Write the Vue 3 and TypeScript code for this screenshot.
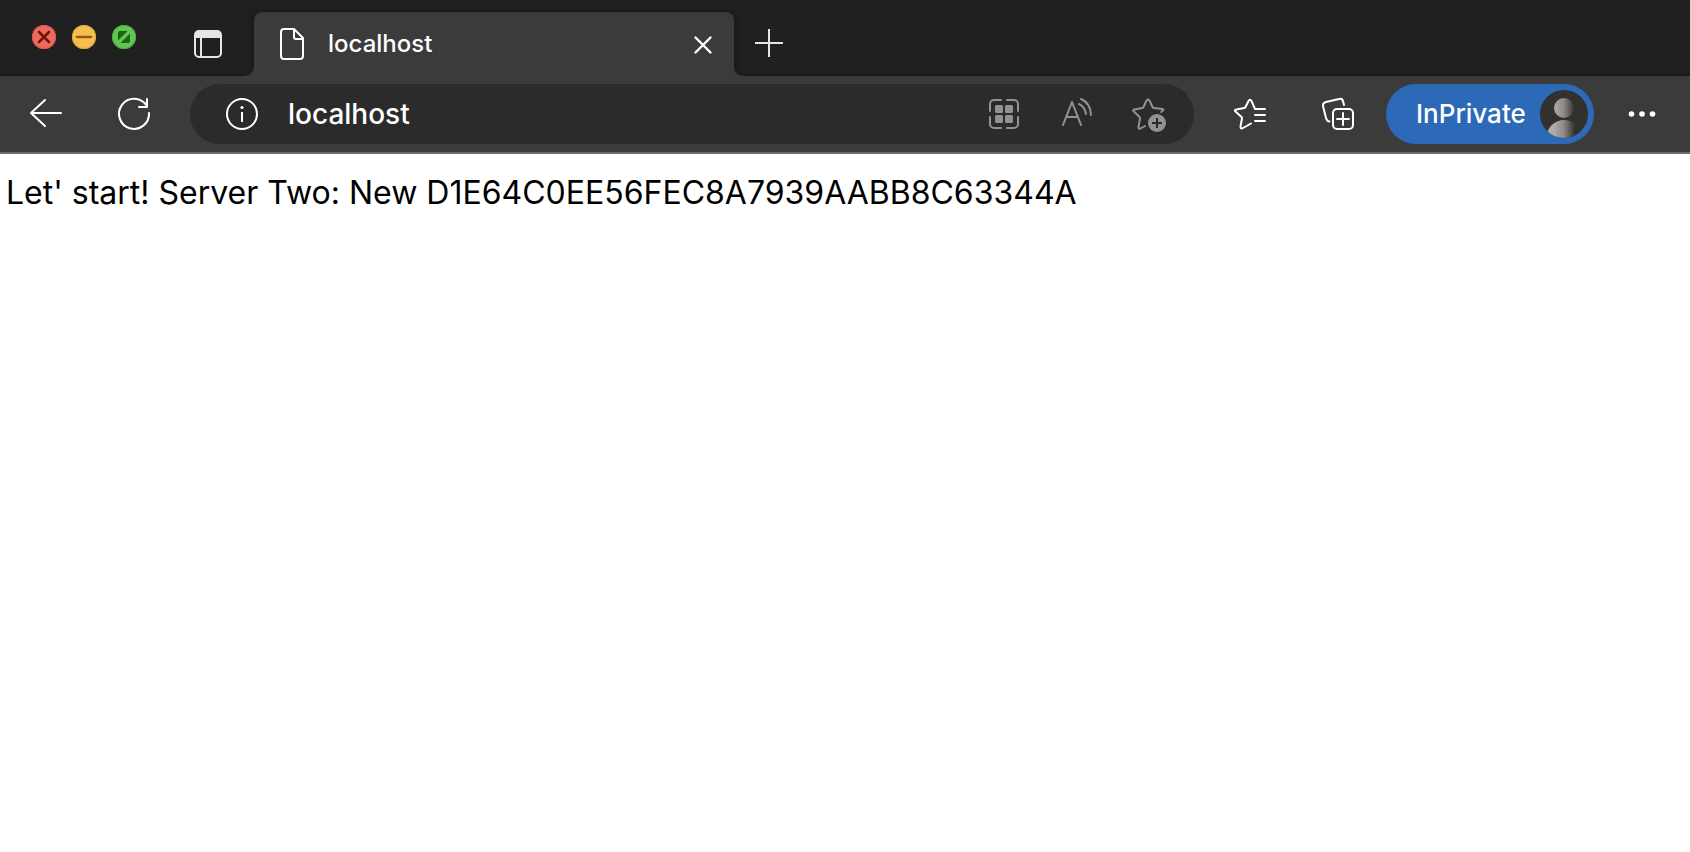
<script setup lang="ts">
import { ref } from 'vue'

interface WindowControl {
  name: string
  kind: 'close' | 'minimize' | 'zoom'
}

const windowControls: WindowControl[] = [
  { name: 'Close window', kind: 'close' },
  { name: 'Minimize window', kind: 'minimize' },
  { name: 'Zoom window', kind: 'zoom' },
]

const tabTitle = ref('localhost')
const address = ref('localhost')
const sessionId = 'D1E64C0EE56FEC8A7939AABB8C63344A'
</script>

<template>
  <div class="browser">
    <header class="tab-strip">
      <div class="window-controls">
        <button
          v-for="control in windowControls"
          :key="control.kind"
          type="button"
          class="light"
          :class="control.kind"
          :aria-label="control.name"
        >
          <svg viewBox="-12 -12 24 24" width="24" height="24" aria-hidden="true">
            <path v-if="control.kind === 'close'" d="M-5 -5 L5 5 M5 -5 L-5 5" stroke="#78100b" stroke-width="2.6" stroke-linecap="round" />
            <path v-else-if="control.kind === 'minimize'" d="M-7 0 H7" stroke="#985a14" stroke-width="2.6" stroke-linecap="round" />
            <path v-else d="M-6 3.5 V-4 a2 2 0 0 1 2 -2 H3.5 Z M6 -3.5 V4 a2 2 0 0 1 -2 2 H-3.5 Z" fill="#1f6115" />
          </svg>
        </button>
      </div>

      <button type="button" class="icon-button tab-actions" aria-label="Tab actions menu">
        <svg class="icon" viewBox="-20 -20 40 40" aria-hidden="true">
          <rect x="-13" y="-13" width="26" height="26" rx="4" fill="none" stroke="#e6e6e6" stroke-width="2" />
          <path d="M-13 -6 V-10 a3 3 0 0 1 3 -3 H10 a3 3 0 0 1 3 3 V-6 Z" fill="#e6e6e6" />
          <path d="M-7 -6 V13" stroke="#e6e6e6" stroke-width="2" />
        </svg>
      </button>

      <div class="tab">
        <svg class="icon" viewBox="-20 -20 40 40" aria-hidden="true">
          <path class="line" d="M-8 -15 H2 L11 -6 V12 a3 3 0 0 1 -3 3 H-8 a3 3 0 0 1 -3 -3 V-12 a3 3 0 0 1 3 -3 Z M2 -15 V-7 a2 2 0 0 0 2 2 H11" />
        </svg>
        <span class="tab-title">{{ tabTitle }}</span>
        <button type="button" class="icon-button tab-close" aria-label="Close tab">
          <svg class="icon" viewBox="-20 -20 40 40" aria-hidden="true">
            <path class="line cross" d="M-8.5 -6.5 L6.5 8.5 M6.5 -6.5 L-8.5 8.5" />
          </svg>
        </button>
      </div>

      <button type="button" class="icon-button new-tab" aria-label="New tab">
        <svg class="icon" viewBox="-20 -20 40 40" aria-hidden="true">
          <path d="M-14 0 H14 M0 -14 V14" stroke="#e6e6e6" stroke-width="2" />
        </svg>
      </button>
    </header>

    <nav class="toolbar" aria-label="Browser toolbar">
      <div class="group navigation">
        <button type="button" class="icon-button" aria-label="Back">
          <svg class="icon" viewBox="-20 -20 40 40" aria-hidden="true">
            <path class="line" d="M15 -1 H-15 M-1 -14 L-15 -1 L-1 12" />
          </svg>
        </button>
        <button type="button" class="icon-button" aria-label="Refresh">
          <svg class="icon" viewBox="-20 -20 40 40" aria-hidden="true">
            <path class="line" d="M15 -1 A15 15 0 1 1 12.5 -8.5 M13 -15 V-7 H5" />
          </svg>
        </button>
      </div>

      <form class="address-bar" @submit.prevent>
        <button type="button" class="icon-button site-info" aria-label="View site information">
          <svg class="icon" viewBox="-20 -20 40 40" aria-hidden="true">
            <circle class="line" r="15" />
            <circle cy="-6.5" r="1.6" fill="#fff" />
            <path d="M0 -2 V8" stroke="#fff" stroke-width="2" />
          </svg>
        </button>
        <input v-model="address" type="text" class="address" aria-label="Address" spellcheck="false" />
        <button type="button" class="icon-button muted" aria-label="Apps available">
          <svg class="icon" viewBox="-19 -20 40 40" aria-hidden="true">
            <path class="line" d="M-14 -3 V-10 a4 4 0 0 1 4 -4 H-3 M3 -14 H10 a4 4 0 0 1 4 4 V-3 M14 3 V10 a4 4 0 0 1 -4 4 H3 M-3 14 H-10 a4 4 0 0 1 -4 -4 V3" />
            <g fill="#929292">
              <rect x="-9" y="-9" width="8" height="8" rx="1.5" />
              <rect x="1" y="-9" width="8" height="8" rx="1.5" />
              <rect x="-9" y="1" width="8" height="8" rx="1.5" />
              <rect x="1" y="1" width="8" height="8" rx="1.5" />
            </g>
          </svg>
        </button>
        <button type="button" class="icon-button muted" aria-label="Read aloud">
          <svg class="icon" viewBox="-20 -20 40 40" aria-hidden="true">
            <path class="line" d="M-14 11 L-5 -12 L4 11 M-11 3 H1 M2 -10 Q8 -7 9 0 M4 -15 Q13.5 -11 14 1" />
          </svg>
        </button>
        <button type="button" class="icon-button muted" aria-label="Add this page to favorites">
          <svg class="icon" viewBox="-20 -20 40 40" aria-hidden="true">
            <path class="line" d="M12 -2 L14 -3.5 Q15 -5 13.5 -5 L5 -6 Q4 -6 3.5 -7 L0.5 -13.5 Q-1 -15.5 -2.5 -13.5 L-5.5 -7 Q-6 -6 -7 -6 L-14.5 -4.5 Q-17 -4 -15 -2.5 L-9.5 3 Q-9 3.5 -9 4.5 L-10.5 13 Q-10.5 15.5 -8.5 14.5 L-4 12" />
            <circle cx="8" cy="9" r="9" fill="#929292" />
            <path d="M3 9 H13 M8 4 V14" stroke="#2b2b2b" stroke-width="2" />
          </svg>
        </button>
      </form>

      <div class="group collections">
        <button type="button" class="icon-button" aria-label="Favorites">
          <svg class="icon" viewBox="-20 -20 40 40" aria-hidden="true">
            <path class="line" d="M15 -5 H5 L1.5 -13 Q0 -15.5 -1.5 -13 L-4.5 -7 Q-5 -6 -6 -6 L-13.5 -4.5 Q-16.5 -4 -14 -2 L-8.5 3 Q-8 3.5 -8 4.5 L-9.5 12.5 Q-9.5 15.5 -7 14 L1 9.5 M5 1 H15 M5 7 H15" />
          </svg>
        </button>
        <button type="button" class="icon-button" aria-label="Collections">
          <svg class="icon" viewBox="-20 -20 40 40" aria-hidden="true">
            <rect class="line" x="-5" y="-5" width="20" height="20" rx="4" />
            <path class="line" d="M5 -1 V11 M-1 5 H11 M6 -9 L5 -13 Q4 -16 1 -15 L-12 -12 Q-15.5 -11 -15 -8 L-12 4 Q-11 7.5 -8.5 7.5" />
          </svg>
        </button>
      </div>

      <button type="button" class="profile">
        <span>InPrivate</span>
        <svg class="avatar" viewBox="-24 -24 48 48" aria-hidden="true">
          <defs>
            <linearGradient id="silhouette" gradientUnits="userSpaceOnUse" x1="-10" y1="0" x2="11" y2="0">
              <stop offset="0" stop-color="#b0aca8" />
              <stop offset="0.45" stop-color="#8d8a87" />
              <stop offset="1" stop-color="#32312e" />
            </linearGradient>
            <clipPath id="avatar-circle"><circle r="24" /></clipPath>
          </defs>
          <circle r="24" fill="#32312e" />
          <g clip-path="url(#avatar-circle)" fill="url(#silhouette)">
            <circle cy="-6" r="10" />
            <ellipse cy="25" rx="18" ry="19" />
          </g>
        </svg>
      </button>

      <button type="button" class="icon-button" aria-label="Settings and more">
        <svg class="icon" viewBox="-20 -20 40 40" aria-hidden="true" fill="#fff">
          <circle cx="-10.5" r="2.8" />
          <circle r="2.8" />
          <circle cx="10.5" r="2.8" />
        </svg>
      </button>
    </nav>

    <main class="page">
      <p>Let' start! Server Two: New {{ sessionId }}</p>
    </main>
  </div>
</template>

<style>
body {
  margin: 0;
  background: #fff;
}
</style>

<style scoped>
.browser {
  min-height: 100vh;
  background: #fff;
  color: #fff;
  font-family: Inter, Roboto, sans-serif;
  font-weight: 500;
}

button,
input {
  margin: 0;
  padding: 0;
  border: 0;
  background: none;
  color: inherit;
  font: inherit;
}

.tab-strip {
  display: flex;
  align-items: flex-end;
  height: 76px;
  box-sizing: border-box;
  background: linear-gradient(#202020 72px, #191919);
}

.window-controls {
  display: flex;
  gap: 16px;
  margin-bottom: 27px;
  padding-left: 32px;
}

.light {
  width: 24px;
  height: 24px;
  border-radius: 50%;
}

.light svg {
  display: block;
}

.close {
  background: #ed6a5e;
  box-shadow: inset 0 0 0 1px #d9564b;
}

.minimize {
  background: #f5bf4f;
  box-shadow: inset 0 0 0 1px #dba53c;
}

.zoom {
  background: #61c554;
  box-shadow: inset 0 0 0 1px #4faa41;
}

.icon-button {
  display: flex;
  flex: none;
  align-items: center;
  justify-content: center;
  width: 60px;
  height: 60px;
}

.icon {
  flex: none;
  width: 40px;
  height: 40px;
}

.line {
  fill: none;
  stroke: #fff;
  stroke-width: 2;
  stroke-linecap: round;
  stroke-linejoin: round;
}

.cross {
  stroke-width: 2.4;
}

.tab-actions {
  margin: 0 16px 2px 42px;
}

.tab {
  position: relative;
  display: flex;
  align-items: center;
  width: 480px;
  height: 64px;
  box-sizing: border-box;
  padding-left: 18px;
  border-radius: 8px 8px 0 0;
  background: #3b3b3b;
  box-shadow: 0 0 5px rgba(0, 0, 0, 0.5);
}

.tab::before,
.tab::after {
  content: '';
  position: absolute;
  bottom: 0;
  width: 8px;
  height: 8px;
}

.tab::before {
  right: 100%;
  background: radial-gradient(circle at 0 0, transparent 7px, #3b3b3b 8px);
}

.tab::after {
  left: 100%;
  background: radial-gradient(circle at 100% 0, transparent 7px, #3b3b3b 8px);
}

.tab-title {
  flex: 1;
  padding-left: 16px;
  font-size: 24px;
  line-height: 32px;
}

.new-tab {
  margin: 0 0 3px 5px;
}

.toolbar {
  position: relative;
  display: flex;
  align-items: center;
  padding: 8px 18px 8px 16px;
  border-bottom: 2px solid #6b6b6b;
  background: #3b3b3b;
}

.group {
  display: flex;
  gap: 28px;
}

.navigation {
  margin-right: 26px;
}

.collections {
  margin: 0 18px 0 26px;
}

.address-bar {
  display: flex;
  flex: 1;
  align-items: center;
  gap: 12px;
  min-width: 0;
  height: 60px;
  box-sizing: border-box;
  padding: 0 15px 0 22px;
  border-radius: 30px;
  background: #2b2b2b;
}

.address {
  flex: 1;
  min-width: 0;
  margin-left: 4px;
  outline: 0;
  font-size: 28px;
  line-height: 36px;
}

.muted .line {
  stroke: #929292;
}

.profile {
  display: flex;
  align-items: center;
  justify-content: space-between;
  flex: none;
  width: 208px;
  height: 60px;
  margin-right: 18px;
  padding: 0 6px 0 30px;
  border-radius: 30px;
  background: #2c6ab8;
  font-size: 26px;
  line-height: 36px;
}

.avatar {
  width: 48px;
  height: 48px;
}

.page {
  padding: 20px 6px;
  color: #000;
  font-family: Inter, sans-serif;
  font-size: 32px;
  font-weight: 400;
  line-height: 38px;
}

.page p {
  margin: 0;
}
</style>
